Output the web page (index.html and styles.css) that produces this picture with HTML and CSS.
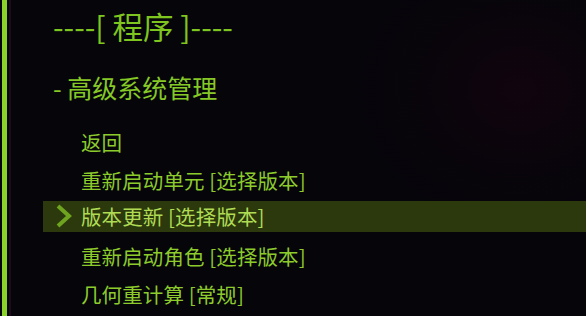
FILE: index.html
```html
<!DOCTYPE html>
<html lang="zh-CN">
<head>
<meta charset="utf-8">
<title>程序</title>
<link rel="stylesheet" href="styles.css">
</head>
<body>
<div class="screen">
  <div class="edge"></div>
  <div class="edge-line"></div>
  <main class="panel">
    <h1 class="title">----[ 程序 ]----</h1>
    <h2 class="section">- 高级系统管理</h2>
    <ul class="menu">
      <li class="item"><span class="label">返回</span></li>
      <li class="item"><span class="label">重新启动单元 [选择版本]</span></li>
      <li class="item selected">
        <svg class="chevron" width="18" height="24" viewBox="0 0 18 24"><polyline points="3,2 14,12 3,22" fill="none" stroke="#6ea41f" stroke-width="4" stroke-linejoin="miter"/></svg>
        <span class="label">版本更新 [选择版本]</span>
      </li>
      <li class="item"><span class="label">重新启动角色 [选择版本]</span></li>
      <li class="item"><span class="label">几何重计算 [常规]</span></li>
    </ul>
  </main>
</div>
</body>
</html>
```

FILE: styles.css
```css
html, body {
  margin: 0;
  padding: 0;
  height: 100%;
}
body {
  background: #05050a;
  font-family: "Noto Sans CJK SC", "Noto Sans", sans-serif;
  overflow: hidden;
}
.screen {
  display: flex;
  height: 316px;
  background:
    radial-gradient(ellipse 190px 160px at 520px 90px, rgba(22, 4, 16, 0.7), rgba(14, 3, 12, 0.35) 55%, rgba(0, 0, 0, 0) 100%),
    #05050a;
}
.edge {
  width: 5px;
  margin-left: 2px;
  background: #8bd22b;
  flex: none;
}
.edge-line {
  width: 2px;
  margin-left: 2px;
  background: #1e0a1c;
  flex: none;
}
.panel {
  flex: 1;
  padding-top: 6px;
}
.title {
  margin: 0 0 0 42px;
  font-size: 30.5px;
  line-height: 40px;
  font-weight: 400;
  color: #7fc51f;
  white-space: nowrap;
}
.section {
  margin: 24px 0 0 42px;
  font-size: 25px;
  line-height: 34px;
  font-weight: 400;
  color: #86c926;
  white-space: nowrap;
}
.menu {
  list-style: none;
  margin: 23px 0 0 32px;
  padding: 0;
  display: flex;
  flex-direction: column;
  gap: 7px;
}
.item {
  display: flex;
  align-items: center;
  height: 31px;
  padding-left: 38px;
  position: relative;
  color: #8dcb2c;
  font-size: 20.5px;
  letter-spacing: 0.1px;
  white-space: nowrap;
}
.item.selected {
  background: #2c390c;
  color: #b0dc55;
  margin-top: -2px;
  margin-bottom: 2px;
}
.chevron {
  position: absolute;
  left: 12px;
  top: 3px;
}
.label {
  line-height: 31px;
}
```
